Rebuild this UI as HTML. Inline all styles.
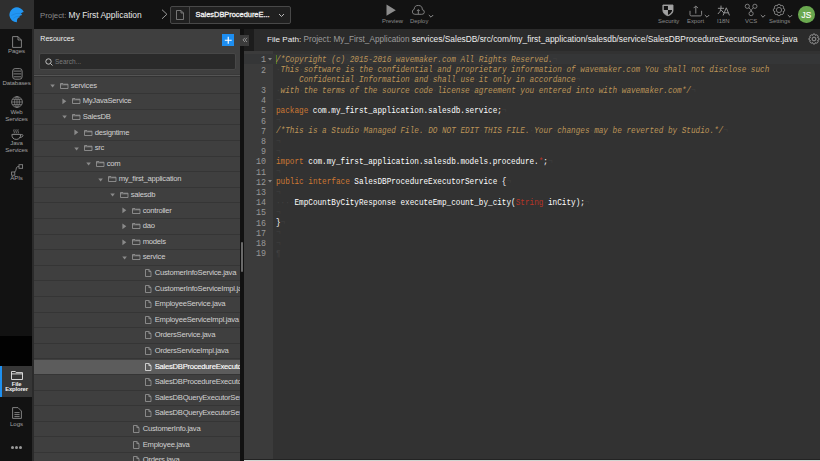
<!DOCTYPE html>
<html><head><meta charset="utf-8">
<style>
*{margin:0;padding:0;box-sizing:border-box}
html,body{width:820px;height:461px;overflow:hidden;background:#111;font-family:"Liberation Sans",sans-serif}
.a{position:absolute}
#top{left:0;top:0;width:820px;height:29px;background:#121212}
#logo{left:0;top:0;width:33.5px;height:28.5px;background:#2f2f2f}
#nav{left:0;top:29px;width:32px;height:432px;background:#121212}
#res{left:34px;top:29px;width:206px;height:432px;background:#3f3f3f;overflow:hidden}
#split{left:240px;top:29px;width:4px;height:432px;background:#111}
#fpdark{left:244px;top:29px;width:10px;height:22px;background:#1c1c1c}
#fp{left:254px;top:29px;width:566px;height:22px;background:#2b2b2b}
#gut{left:244px;top:51px;width:29px;height:410px;background:#3b3b3b}
#code{left:273px;top:51px;width:547px;height:410px;background:#323232}
.ti{position:absolute;color:#8a8a8a;font-size:5.9px;line-height:7px;text-align:center;white-space:nowrap}
.tl{position:absolute;color:#a0a0a0;font-size:6.1px;letter-spacing:-0.1px;line-height:6.5px;text-align:center;width:33px;left:0;white-space:nowrap}
.row{position:absolute;left:0;width:206px;height:15.6px;border-bottom:1px solid #353535;color:#d0d0d0;font-size:7.65px;letter-spacing:-0.25px;line-height:13.4px;white-space:nowrap}
.row span{position:absolute;top:0}
.row svg{position:absolute}
.code{position:absolute;left:276px;font-family:"Liberation Mono",monospace;font-size:8.8px;line-height:10.2px;white-space:pre;color:#fff;transform:scaleX(0.8731);transform-origin:0 0}
.gn{position:absolute;left:244px;width:22px;text-align:right;font-family:"Liberation Mono",monospace;font-size:8.4px;line-height:10.2px;color:#999}
.cm{color:#BC9458;font-style:italic}
.kw{color:#CC7833}
.sf{color:#B83426}
.inv{color:#404040;font-style:normal}
</style></head><body>
<div id="top" class="a"></div>
<div id="logo" class="a">
  <svg class="a" style="left:9px;top:6.5px" width="16" height="16" viewBox="0 0 16 16">
    <path d="M7.93 15.27 A7.45 7.45 0 1 1 14.77 5.02 Q13.1 5.4 11.9 6.4 Q12.9 7 13.17 7.98 Q11.5 8.2 10.3 9.15 Q10.8 9.6 10.67 10.3 Q9.2 10.7 8.3 11.9 Q7.8 13.5 7.93 15.27 Z" fill="#2196f3"/>
    <path d="M2.4 8.4 Q6.8 5.6 11.9 6.4" stroke="#1a6fc0" stroke-width="0.6" fill="none" opacity="0.6"/>
    <path d="M4.2 11.4 Q7.2 9 10.3 9.15" stroke="#1a6fc0" stroke-width="0.6" fill="none" opacity="0.6"/>
  </svg>
</div>
<div class="a" style="left:40px;top:9.6px;font-size:7.8px;line-height:10px;white-space:nowrap;color:#8a8a8a">Project: <span style="color:#e6e6e6;font-size:8.45px">My First Application</span></div>
<!-- breadcrumb chevron -->
<svg class="a" style="left:160.5px;top:8.6px" width="8" height="10.5" viewBox="0 0 8 10.5"><path d="M1 0.7 L5.9 5.25 L1 9.8" stroke="#9a9a9a" stroke-width="1" fill="none"/></svg>
<!-- dropdown -->
<div class="a" style="left:170px;top:6px;width:121px;height:18px;border:1px solid #484848;border-radius:2px;background:#202020"></div>
<div class="a" style="left:189px;top:7px;width:1px;height:16px;background:#484848"></div>
<svg class="a" style="left:175px;top:10px" width="10" height="10" viewBox="0 0 10 10"><path d="M1.5 0.5 H6 L8.5 3 V9.5 H1.5 Z M6 0.5 V3 H8.5" stroke="#8a8a8a" stroke-width="0.8" fill="none"/></svg>
<div class="a" style="left:195.5px;top:10px;font-size:7.42px;line-height:9px;color:#f0f0f0;white-space:nowrap;-webkit-text-stroke:0.3px #f0f0f0">SalesDBProcedureE...</div>
<svg class="a" style="left:278px;top:13px" width="7" height="5" viewBox="0 0 7 5"><path d="M1 1 L3.5 3.5 L6 1" stroke="#bbb" stroke-width="1" fill="none"/></svg>

<!-- toolbar icons -->
<svg class="a" style="left:386px;top:4px" width="10" height="13" viewBox="0 0 10 13"><path d="M0.5 0.5 L9.8 6.2 L0.5 11.8 Z" fill="#8c8c8c"/></svg>
<div class="ti" style="left:382px;top:18px">Preview</div>
<svg class="a" style="left:412.4px;top:4.2px" width="13" height="11" viewBox="0 0 13 11"><path d="M2.9 10.3 H9.7 A2.3 2.3 0 0 0 10.3 5.7 A4.05 4.05 0 0 0 2.2 5.3 A2.55 2.55 0 0 0 2.9 10.3 Z" stroke="#8a8a8a" stroke-width="0.9" fill="none"/><path d="M6.3 10.1 V5.6 M4.9 7 L6.3 5.6 L7.7 7" stroke="#8a8a8a" stroke-width="0.9" fill="none"/></svg>
<div class="ti" style="left:410px;top:18px">Deploy</div>
<svg class="a" style="left:428px;top:14px" width="6" height="5" viewBox="0 0 6 5"><path d="M0.8 1 L3 3.2 L5.2 1" stroke="#9a9a9a" stroke-width="0.9" fill="none"/></svg>

<svg class="a" style="left:662px;top:4px" width="12" height="13" viewBox="0 0 12 13"><path d="M0.9 1 H11 V6.3 Q11 10.2 5.95 11.8 Q0.9 10.2 0.9 6.3 Z" stroke="#9c9c9c" stroke-width="0.9" fill="#a3a3a3"/><path d="M1.8 1.9 H5.95 V6.1 H1.8 Z M5.95 6.1 H10.1 Q9.9 9.4 5.95 10.9 Z" fill="#111"/></svg>
<div class="ti" style="left:658px;top:18px">Security</div>
<svg class="a" style="left:688.6px;top:4px" width="14" height="13" viewBox="0 0 14 13"><path d="M1 6.8 V10.6 Q1 11.9 2.3 11.9 H11.3 Q12.6 11.9 12.6 10.6 V6.8" stroke="#8c8c8c" stroke-width="0.95" fill="none"/><path d="M6.8 9.6 V2.4 M4.8 4.1 Q5.6 2.6 6.8 2.2 Q8 2.6 8.8 4.1" stroke="#8c8c8c" stroke-width="0.95" fill="none"/></svg>
<div class="ti" style="left:687px;top:18px">Export</div>
<svg class="a" style="left:704px;top:14px" width="6" height="5" viewBox="0 0 6 5"><path d="M0.8 1 L3 3.2 L5.2 1" stroke="#9a9a9a" stroke-width="0.9" fill="none"/></svg>
<svg class="a" style="left:716.5px;top:4.5px" width="14" height="11" viewBox="0 0 14 11"><path d="M4 0.6 V3.2 M0.9 3.3 H7 M4 3.3 Q3.7 6.8 0.9 9 M4.2 5 L7 8.2" stroke="#9a9a9a" stroke-width="0.95" fill="none"/><path d="M6.1 10.4 L9.3 2.8 L12.5 10.4 M7.3 7.8 H11.3" stroke="#9a9a9a" stroke-width="0.95" fill="none"/></svg>
<div class="ti" style="left:717px;top:18px">I18N</div>
<svg class="a" style="left:744px;top:3px" width="14" height="14" viewBox="0 0 14 14"><circle cx="3.3" cy="3.3" r="2.1" stroke="#8c8c8c" stroke-width="0.85" fill="none"/><circle cx="10.9" cy="3.3" r="2.1" stroke="#8c8c8c" stroke-width="0.85" fill="none"/><circle cx="7.1" cy="10.6" r="2.1" stroke="#8c8c8c" stroke-width="0.85" fill="none"/><path d="M4.8 4.8 Q7.1 6.2 7.1 8.5 M9.4 4.8 Q7.1 6.2 7.1 8.5" stroke="#8c8c8c" stroke-width="0.85" fill="none"/></svg>
<div class="ti" style="left:745px;top:18px">VCS</div>
<svg class="a" style="left:759.5px;top:14px" width="6" height="5" viewBox="0 0 6 5"><path d="M0.8 1 L3 3.2 L5.2 1" stroke="#9a9a9a" stroke-width="0.9" fill="none"/></svg>
<svg class="a" style="left:771.5px;top:2.5px" width="14" height="14" viewBox="0 0 14 14"><path d="M11.07 8.68 A1.6 1.6 0 1 1 8.68 11.07 A1.6 1.6 0 1 1 5.32 11.07 A1.6 1.6 0 1 1 2.93 8.68 A1.6 1.6 0 1 1 2.93 5.32 A1.6 1.6 0 1 1 5.32 2.93 A1.6 1.6 0 1 1 8.68 2.93 A1.6 1.6 0 1 1 11.07 5.32 A1.6 1.6 0 1 1 11.07 8.68 Z" stroke="#8c8c8c" stroke-width="0.85" fill="none"/><circle cx="7" cy="7" r="2.6" stroke="#8c8c8c" stroke-width="0.85" fill="none"/></svg>
<div class="ti" style="left:769px;top:18px">Settings</div>
<svg class="a" style="left:787px;top:14px" width="6" height="5" viewBox="0 0 6 5"><path d="M0.8 1 L3 3.2 L5.2 1" stroke="#9a9a9a" stroke-width="0.9" fill="none"/></svg>
<div class="a" style="left:798.2px;top:6.2px;width:16.4px;height:16.4px;border-radius:50%;background:#6aa84f;color:#fff;font-size:8.2px;line-height:20.2px;text-align:center;-webkit-text-stroke:0.15px #fff">JS</div>

<!-- left nav -->
<div id="nav" class="a"></div>
<svg class="a" style="left:12px;top:36px" width="10" height="12" viewBox="0 0 10 12"><path d="M0.6 0.6 H6 L9.4 4 V11.4 H0.6 Z M6 0.6 V4 H9.4" stroke="#8c8c8c" stroke-width="0.9" fill="none"/></svg>
<div class="tl" style="top:48px">Pages</div>
<svg class="a" style="left:11.7px;top:67.6px" width="11" height="12" viewBox="0 0 11 12"><rect x="0.7" y="0.6" width="9.4" height="10.6" rx="2.4" stroke="#8c8c8c" stroke-width="0.9" fill="none"/><path d="M1.6 3.1 H9.2 M1.6 5.9 H9.2 M1.6 8.8 H9.2" stroke="#8c8c8c" stroke-width="0.9"/></svg>
<div class="tl" style="top:80px">Databases</div>
<svg class="a" style="left:10.5px;top:96px" width="12" height="12" viewBox="0 0 12 12"><circle cx="6" cy="6" r="5.4" stroke="#8c8c8c" stroke-width="0.8" fill="none"/><ellipse cx="6" cy="6" rx="2.4" ry="5.4" stroke="#8c8c8c" stroke-width="0.7" fill="none"/><path d="M6 0.6 V11.4 M0.6 6 H11.4 M1.3 3.4 H10.7 M1.3 8.6 H10.7" stroke="#8c8c8c" stroke-width="0.7" fill="none"/></svg>
<div class="tl" style="top:109px">Web<br>Services</div>
<svg class="a" style="left:10.5px;top:128.5px" width="13" height="11" viewBox="0 0 13 11"><path d="M3.1 0.4 Q2.5 1.6 3.1 2.6 Q3.6 3.5 3.1 4.4 M5.1 0.4 Q4.5 1.6 5.1 2.6 Q5.6 3.5 5.1 4.4 M7.1 0.4 Q6.5 1.6 7.1 2.6 Q7.6 3.5 7.1 4.4" stroke="#8c8c8c" stroke-width="0.85" fill="none"/><path d="M0.9 5.4 H9.6 Q9.6 10.4 5.25 10.4 Q0.9 10.4 0.9 5.4 Z" stroke="#8c8c8c" stroke-width="0.95" fill="none"/><path d="M9.4 5.6 Q12.4 5.2 12 6.8 Q11.5 8.4 8.6 8.6" stroke="#8c8c8c" stroke-width="0.85" fill="none"/></svg>
<div class="tl" style="top:140px">Java<br>Services</div>
<svg class="a" style="left:10.8px;top:163.5px" width="13" height="12" viewBox="0 0 13 12"><rect x="0.6" y="8" width="3.2" height="3.2" stroke="#8c8c8c" stroke-width="0.85" fill="none"/><rect x="8" y="0.7" width="3.6" height="3.6" stroke="#8c8c8c" stroke-width="0.85" fill="none"/><path d="M3.8 8 Q5.2 6.6 5.4 3.8 Q5.6 2.5 8 2.5" stroke="#8c8c8c" stroke-width="0.85" fill="none"/></svg>
<div class="tl" style="top:174.5px">APIs</div>

<div class="a" style="left:0;top:335.7px;width:32px;height:30px;background:#020202"></div>
<div class="a" style="left:32px;top:29px;width:2px;height:432px;background:#2b2b2b"></div>
<div class="a" style="left:0;top:365.6px;width:32px;height:31.6px;background:#363636"></div>
<div class="a" style="left:0;top:365.6px;width:1.6px;height:31.6px;background:#1e90f0"></div>
<svg class="a" style="left:10.8px;top:370.6px" width="12" height="9" viewBox="0 0 12 9"><path d="M0.5 0.5 H4.3 L5.2 1.6 H11.5 V8.5 H0.5 Z M0.5 2.9 H11.5" stroke="#e8e8e8" stroke-width="0.9" fill="none"/></svg>
<div class="tl" style="top:381.6px;color:#f2f2f2;font-weight:bold;font-size:5.9px;line-height:5.8px;letter-spacing:-0.15px">File<br>Explorer</div>
<svg class="a" style="left:12px;top:407px" width="10" height="12" viewBox="0 0 10 12"><path d="M0.6 0.6 H6 L9.4 4 V11.4 H0.6 Z M2.4 5.6 H7.6 M2.4 7.6 H7.6 M2.4 9.6 H7.6" stroke="#8c8c8c" stroke-width="0.9" fill="none"/></svg>
<div class="tl" style="top:421px">Logs</div>
<div class="a" style="left:10.6px;top:446px;width:13px;height:4px">
  <div class="a" style="left:0;top:0;width:3px;height:3px;border-radius:50%;background:#999"></div>
  <div class="a" style="left:4.4px;top:0;width:3px;height:3px;border-radius:50%;background:#999"></div>
  <div class="a" style="left:8.8px;top:0;width:3px;height:3px;border-radius:50%;background:#999"></div>
</div>

<!-- resources panel -->
<div id="res" class="a">
  <div class="a" style="left:6.3px;top:5.8px;font-size:7.1px;line-height:9px;color:#f0f0f0">Resources</div>
  <div class="a" style="left:187.7px;top:4.6px;width:12.5px;height:12.5px;background:#1d8ef1"></div>
  <svg class="a" style="left:187.7px;top:4.6px" width="12.5" height="12.5" viewBox="0 0 12.5 12.5"><path d="M6.25 2.8 V9.7 M2.8 6.25 H9.7" stroke="#fff" stroke-width="1.15"/></svg>
  <div class="a" style="left:5px;top:24px;width:196.5px;height:16.5px;background:#2a2a2a;border:1px solid #474747;border-radius:2px"></div>
  <svg class="a" style="left:10.5px;top:28.5px" width="8" height="8" viewBox="0 0 8 8"><circle cx="3.5" cy="3.5" r="2.7" stroke="#cfcfcf" stroke-width="0.9" fill="none"/><path d="M5.5 5.5 L7.5 7.5" stroke="#cfcfcf" stroke-width="0.9"/></svg>
  <div class="a" style="left:21px;top:29px;font-size:6.5px;line-height:8px;color:#7a7a7a">Search...</div>
  <div class="a" style="left:0;top:45px;width:207px;height:1px;background:#393939"></div><div class="a" style="left:0;top:46px;width:207px;height:1px;background:#545454"></div><div class="a" style="left:0;top:47px;width:207px;height:1px;background:#333"></div>
  <div id="tree" class="a" style="left:0;top:47px;width:207px;height:400px">
<div class="row" style="top:2.70px;"><svg style="left:15.7px;top:5.6px" width="6" height="4" viewBox="0 0 6 4"><path d="M0.3 0.4 H4.9 L2.6 3.5 Z" fill="#8a8a8a"/></svg><svg style="left:26.1px;top:4.0px" width="8.5" height="6" viewBox="0 0 8.5 6"><path d="M0.5 0.5 H3 L3.6 1.2 H8 V5.5 H0.5 Z M0.5 1.8 H8" stroke="#9a9a9a" stroke-width="0.8" fill="none"/></svg><span style="left:36.7px">services</span></div>
<div class="row" style="top:18.30px;"><svg style="left:27.6px;top:3.9px" width="5" height="7" viewBox="0 0 5 7"><path d="M0.4 0.4 V6.2 L4.3 3.3 Z" fill="#8a8a8a"/></svg><svg style="left:38.1px;top:4.0px" width="8.5" height="6" viewBox="0 0 8.5 6"><path d="M0.5 0.5 H3 L3.6 1.2 H8 V5.5 H0.5 Z M0.5 1.8 H8" stroke="#9a9a9a" stroke-width="0.8" fill="none"/></svg><span style="left:48.7px">MyJavaService</span></div>
<div class="row" style="top:33.90px;"><svg style="left:27.7px;top:5.6px" width="6" height="4" viewBox="0 0 6 4"><path d="M0.3 0.4 H4.9 L2.6 3.5 Z" fill="#8a8a8a"/></svg><svg style="left:38.1px;top:4.0px" width="8.5" height="6" viewBox="0 0 8.5 6"><path d="M0.5 0.5 H3 L3.6 1.2 H8 V5.5 H0.5 Z M0.5 1.8 H8" stroke="#9a9a9a" stroke-width="0.8" fill="none"/></svg><span style="left:48.7px">SalesDB</span></div>
<div class="row" style="top:49.50px;"><svg style="left:39.6px;top:3.9px" width="5" height="7" viewBox="0 0 5 7"><path d="M0.4 0.4 V6.2 L4.3 3.3 Z" fill="#8a8a8a"/></svg><svg style="left:50.1px;top:4.0px" width="8.5" height="6" viewBox="0 0 8.5 6"><path d="M0.5 0.5 H3 L3.6 1.2 H8 V5.5 H0.5 Z M0.5 1.8 H8" stroke="#9a9a9a" stroke-width="0.8" fill="none"/></svg><span style="left:60.7px">designtime</span></div>
<div class="row" style="top:65.10px;"><svg style="left:39.7px;top:5.6px" width="6" height="4" viewBox="0 0 6 4"><path d="M0.3 0.4 H4.9 L2.6 3.5 Z" fill="#8a8a8a"/></svg><svg style="left:50.1px;top:4.0px" width="8.5" height="6" viewBox="0 0 8.5 6"><path d="M0.5 0.5 H3 L3.6 1.2 H8 V5.5 H0.5 Z M0.5 1.8 H8" stroke="#9a9a9a" stroke-width="0.8" fill="none"/></svg><span style="left:60.7px">src</span></div>
<div class="row" style="top:80.70px;"><svg style="left:51.7px;top:5.6px" width="6" height="4" viewBox="0 0 6 4"><path d="M0.3 0.4 H4.9 L2.6 3.5 Z" fill="#8a8a8a"/></svg><svg style="left:62.1px;top:4.0px" width="8.5" height="6" viewBox="0 0 8.5 6"><path d="M0.5 0.5 H3 L3.6 1.2 H8 V5.5 H0.5 Z M0.5 1.8 H8" stroke="#9a9a9a" stroke-width="0.8" fill="none"/></svg><span style="left:72.7px">com</span></div>
<div class="row" style="top:96.30px;"><svg style="left:63.7px;top:5.6px" width="6" height="4" viewBox="0 0 6 4"><path d="M0.3 0.4 H4.9 L2.6 3.5 Z" fill="#8a8a8a"/></svg><svg style="left:74.1px;top:4.0px" width="8.5" height="6" viewBox="0 0 8.5 6"><path d="M0.5 0.5 H3 L3.6 1.2 H8 V5.5 H0.5 Z M0.5 1.8 H8" stroke="#9a9a9a" stroke-width="0.8" fill="none"/></svg><span style="left:84.7px">my_first_application</span></div>
<div class="row" style="top:111.90px;"><svg style="left:75.7px;top:5.6px" width="6" height="4" viewBox="0 0 6 4"><path d="M0.3 0.4 H4.9 L2.6 3.5 Z" fill="#8a8a8a"/></svg><svg style="left:86.1px;top:4.0px" width="8.5" height="6" viewBox="0 0 8.5 6"><path d="M0.5 0.5 H3 L3.6 1.2 H8 V5.5 H0.5 Z M0.5 1.8 H8" stroke="#9a9a9a" stroke-width="0.8" fill="none"/></svg><span style="left:96.7px">salesdb</span></div>
<div class="row" style="top:127.50px;"><svg style="left:87.6px;top:3.9px" width="5" height="7" viewBox="0 0 5 7"><path d="M0.4 0.4 V6.2 L4.3 3.3 Z" fill="#8a8a8a"/></svg><svg style="left:98.1px;top:4.0px" width="8.5" height="6" viewBox="0 0 8.5 6"><path d="M0.5 0.5 H3 L3.6 1.2 H8 V5.5 H0.5 Z M0.5 1.8 H8" stroke="#9a9a9a" stroke-width="0.8" fill="none"/></svg><span style="left:108.7px">controller</span></div>
<div class="row" style="top:143.10px;"><svg style="left:87.6px;top:3.9px" width="5" height="7" viewBox="0 0 5 7"><path d="M0.4 0.4 V6.2 L4.3 3.3 Z" fill="#8a8a8a"/></svg><svg style="left:98.1px;top:4.0px" width="8.5" height="6" viewBox="0 0 8.5 6"><path d="M0.5 0.5 H3 L3.6 1.2 H8 V5.5 H0.5 Z M0.5 1.8 H8" stroke="#9a9a9a" stroke-width="0.8" fill="none"/></svg><span style="left:108.7px">dao</span></div>
<div class="row" style="top:158.70px;"><svg style="left:87.6px;top:3.9px" width="5" height="7" viewBox="0 0 5 7"><path d="M0.4 0.4 V6.2 L4.3 3.3 Z" fill="#8a8a8a"/></svg><svg style="left:98.1px;top:4.0px" width="8.5" height="6" viewBox="0 0 8.5 6"><path d="M0.5 0.5 H3 L3.6 1.2 H8 V5.5 H0.5 Z M0.5 1.8 H8" stroke="#9a9a9a" stroke-width="0.8" fill="none"/></svg><span style="left:108.7px">models</span></div>
<div class="row" style="top:174.30px;"><svg style="left:87.7px;top:5.6px" width="6" height="4" viewBox="0 0 6 4"><path d="M0.3 0.4 H4.9 L2.6 3.5 Z" fill="#8a8a8a"/></svg><svg style="left:98.1px;top:4.0px" width="8.5" height="6" viewBox="0 0 8.5 6"><path d="M0.5 0.5 H3 L3.6 1.2 H8 V5.5 H0.5 Z M0.5 1.8 H8" stroke="#9a9a9a" stroke-width="0.8" fill="none"/></svg><span style="left:108.7px">service</span></div>
<div class="row" style="top:189.90px;"><svg style="left:111.3px;top:3.2px" width="6.5" height="8" viewBox="0 0 6.5 8"><path d="M0.5 0.5 H3.9 L6 2.6 V7.5 H0.5 Z M3.9 0.5 V2.6 H6" stroke="#9a9a9a" stroke-width="0.8" fill="none"/></svg><span style="left:120.7px">CustomerInfoService.java</span></div>
<div class="row" style="top:205.50px;"><svg style="left:111.3px;top:3.2px" width="6.5" height="8" viewBox="0 0 6.5 8"><path d="M0.5 0.5 H3.9 L6 2.6 V7.5 H0.5 Z M3.9 0.5 V2.6 H6" stroke="#9a9a9a" stroke-width="0.8" fill="none"/></svg><span style="left:120.7px">CustomerInfoServiceImpl.java</span></div>
<div class="row" style="top:221.10px;"><svg style="left:111.3px;top:3.2px" width="6.5" height="8" viewBox="0 0 6.5 8"><path d="M0.5 0.5 H3.9 L6 2.6 V7.5 H0.5 Z M3.9 0.5 V2.6 H6" stroke="#9a9a9a" stroke-width="0.8" fill="none"/></svg><span style="left:120.7px">EmployeeService.java</span></div>
<div class="row" style="top:236.70px;"><svg style="left:111.3px;top:3.2px" width="6.5" height="8" viewBox="0 0 6.5 8"><path d="M0.5 0.5 H3.9 L6 2.6 V7.5 H0.5 Z M3.9 0.5 V2.6 H6" stroke="#9a9a9a" stroke-width="0.8" fill="none"/></svg><span style="left:120.7px">EmployeeServiceImpl.java</span></div>
<div class="row" style="top:252.30px;"><svg style="left:111.3px;top:3.2px" width="6.5" height="8" viewBox="0 0 6.5 8"><path d="M0.5 0.5 H3.9 L6 2.6 V7.5 H0.5 Z M3.9 0.5 V2.6 H6" stroke="#9a9a9a" stroke-width="0.8" fill="none"/></svg><span style="left:120.7px">OrdersService.java</span></div>
<div class="row" style="top:267.90px;"><svg style="left:111.3px;top:3.2px" width="6.5" height="8" viewBox="0 0 6.5 8"><path d="M0.5 0.5 H3.9 L6 2.6 V7.5 H0.5 Z M3.9 0.5 V2.6 H6" stroke="#9a9a9a" stroke-width="0.8" fill="none"/></svg><span style="left:120.7px">OrdersServiceImpl.java</span></div>
<div class="row" style="top:283.50px;background:#5c5c5c;color:#ffffff;-webkit-text-stroke:0.12px #fff;"><svg style="left:111.3px;top:3.2px" width="6.5" height="8" viewBox="0 0 6.5 8"><path d="M0.5 0.5 H3.9 L6 2.6 V7.5 H0.5 Z M3.9 0.5 V2.6 H6" stroke="#e8e8e8" stroke-width="0.8" fill="none"/></svg><span style="left:120.7px">SalesDBProcedureExecutorService.java</span></div>
<div class="row" style="top:299.10px;"><svg style="left:111.3px;top:3.2px" width="6.5" height="8" viewBox="0 0 6.5 8"><path d="M0.5 0.5 H3.9 L6 2.6 V7.5 H0.5 Z M3.9 0.5 V2.6 H6" stroke="#9a9a9a" stroke-width="0.8" fill="none"/></svg><span style="left:120.7px">SalesDBProcedureExecutorServiceImpl.java</span></div>
<div class="row" style="top:314.70px;"><svg style="left:111.3px;top:3.2px" width="6.5" height="8" viewBox="0 0 6.5 8"><path d="M0.5 0.5 H3.9 L6 2.6 V7.5 H0.5 Z M3.9 0.5 V2.6 H6" stroke="#9a9a9a" stroke-width="0.8" fill="none"/></svg><span style="left:120.7px">SalesDBQueryExecutorService.java</span></div>
<div class="row" style="top:330.30px;"><svg style="left:111.3px;top:3.2px" width="6.5" height="8" viewBox="0 0 6.5 8"><path d="M0.5 0.5 H3.9 L6 2.6 V7.5 H0.5 Z M3.9 0.5 V2.6 H6" stroke="#9a9a9a" stroke-width="0.8" fill="none"/></svg><span style="left:120.7px">SalesDBQueryExecutorServiceImpl.java</span></div>
<div class="row" style="top:345.90px;"><svg style="left:99.3px;top:3.2px" width="6.5" height="8" viewBox="0 0 6.5 8"><path d="M0.5 0.5 H3.9 L6 2.6 V7.5 H0.5 Z M3.9 0.5 V2.6 H6" stroke="#9a9a9a" stroke-width="0.8" fill="none"/></svg><span style="left:108.7px">CustomerInfo.java</span></div>
<div class="row" style="top:361.50px;"><svg style="left:99.3px;top:3.2px" width="6.5" height="8" viewBox="0 0 6.5 8"><path d="M0.5 0.5 H3.9 L6 2.6 V7.5 H0.5 Z M3.9 0.5 V2.6 H6" stroke="#9a9a9a" stroke-width="0.8" fill="none"/></svg><span style="left:108.7px">Employee.java</span></div>
<div class="row" style="top:377.10px;"><svg style="left:99.3px;top:3.2px" width="6.5" height="8" viewBox="0 0 6.5 8"><path d="M0.5 0.5 H3.9 L6 2.6 V7.5 H0.5 Z M3.9 0.5 V2.6 H6" stroke="#9a9a9a" stroke-width="0.8" fill="none"/></svg><span style="left:108.7px">Orders.java</span></div>
</div>
</div>
<div id="split" class="a"></div>
<div class="a" style="left:241px;top:242px;width:2px;height:30px;background:#6a6a6a;border-radius:1px"></div>

<!-- editor -->
<div id="fpdark" class="a"></div>
<div id="fp" class="a"></div>
<div class="a" style="left:240px;top:34.6px;width:9px;height:11.2px;background:#3b3b3b"></div>
<svg class="a" style="left:241.5px;top:37.3px" width="6" height="6" viewBox="0 0 6 6"><path d="M2.9 0.8 L1 2.9 L2.9 5 M5 0.8 L3.1 2.9 L5 5" stroke="#b5b5b5" stroke-width="0.7" fill="none"/></svg>
<div class="a" style="left:267px;top:33.5px;font-size:8.1px;line-height:10px;white-space:nowrap;color:#ededed">File Path: <span style="color:#9c9c9c;font-size:8.2px">Project: My_First_Application</span> <span style="font-size:8.38px">services/SalesDB/src/com/my_first_application/salesdb/service/SalesDBProcedureExecutorService.java</span></div>
<svg class="a" style="left:808px;top:33px" width="12" height="12" viewBox="0 0 12 12"><path d="M9.60 7.49 A1.45 1.45 0 1 1 7.49 9.60 A1.45 1.45 0 1 1 4.51 9.60 A1.45 1.45 0 1 1 2.40 7.49 A1.45 1.45 0 1 1 2.40 4.51 A1.45 1.45 0 1 1 4.51 2.40 A1.45 1.45 0 1 1 7.49 2.40 A1.45 1.45 0 1 1 9.60 4.51 A1.45 1.45 0 1 1 9.60 7.49 Z" stroke="#a8a8a8" stroke-width="0.85" fill="none"/><circle cx="6" cy="6" r="1.9" stroke="#a8a8a8" stroke-width="0.85" fill="none"/></svg>

<div id="gut" class="a"></div>
<div id="code" class="a"></div>
<div class="a" style="left:244px;top:54px;width:29px;height:10.2px;background:#353637"></div>
<div class="a" style="left:273px;top:54px;width:547px;height:10.2px;background:#353637"></div>
<div class="a" style="left:244px;top:459px;width:576px;height:1px;background:#232323"></div>
<div class="a" style="left:244px;top:460px;width:576px;height:1px;background:#d2d5d2"></div>
<div class="gn" style="top:55.30px">1</div>
<div class="gn" style="top:65.50px">2</div>
<div class="gn" style="top:85.90px">3</div>
<div class="gn" style="top:96.10px">4</div>
<div class="gn" style="top:106.30px">5</div>
<div class="gn" style="top:116.50px">6</div>
<div class="gn" style="top:126.70px">7</div>
<div class="gn" style="top:136.90px">8</div>
<div class="gn" style="top:147.10px">9</div>
<div class="gn" style="top:157.30px">10</div>
<div class="gn" style="top:167.50px">11</div>
<div class="gn" style="top:177.70px">12</div>
<div class="gn" style="top:187.90px">13</div>
<div class="gn" style="top:198.10px">14</div>
<div class="gn" style="top:208.30px">15</div>
<div class="gn" style="top:218.50px">16</div>
<div class="gn" style="top:228.70px">17</div>
<div class="gn" style="top:238.90px">18</div>
<div class="gn" style="top:249.10px">19</div>
<svg class="a" style="left:268px;top:57.80px" width="4" height="3" viewBox="0 0 4 3"><path d="M0 0 H4 L2 2.6 Z" fill="#8a8a8a"/></svg>
<svg class="a" style="left:268px;top:180.20px" width="4" height="3" viewBox="0 0 4 3"><path d="M0 0 H4 L2 2.6 Z" fill="#8a8a8a"/></svg>
<div class="a" style="left:275.5px;top:54.50px;width:0.8px;height:9.5px;background:#91FF00;opacity:0.35"></div>
<div class="code" style="top:55.00px"><span class="cm">/*Copyright<span class="inv">·</span>(c)<span class="inv">·</span>2015-2016<span class="inv">·</span>wavemaker.com<span class="inv">·</span>All<span class="inv">·</span>Rights<span class="inv">·</span>Reserved.</span><span class="inv">¬</span></div>
<div class="code" style="top:65.20px"><span class="cm"><span class="inv">·</span>This<span class="inv">·</span>software<span class="inv">·</span>is<span class="inv">·</span>the<span class="inv">·</span>confidential<span class="inv">·</span>and<span class="inv">·</span>proprietary<span class="inv">·</span>information<span class="inv">·</span>of<span class="inv">·</span>wavemaker.com<span class="inv">·</span>You<span class="inv">·</span>shall<span class="inv">·</span>not<span class="inv">·</span>disclose<span class="inv">·</span>such</span></div>
<div class="code" style="top:75.40px">     <span class="cm">Confidential<span class="inv">·</span>Information<span class="inv">·</span>and<span class="inv">·</span>shall<span class="inv">·</span>use<span class="inv">·</span>it<span class="inv">·</span>only<span class="inv">·</span>in<span class="inv">·</span>accordance</span><span class="inv">¬</span></div>
<div class="code" style="top:85.60px"><span class="cm"><span class="inv">·</span>with<span class="inv">·</span>the<span class="inv">·</span>terms<span class="inv">·</span>of<span class="inv">·</span>the<span class="inv">·</span>source<span class="inv">·</span>code<span class="inv">·</span>license<span class="inv">·</span>agreement<span class="inv">·</span>you<span class="inv">·</span>entered<span class="inv">·</span>into<span class="inv">·</span>with<span class="inv">·</span>wavemaker.com*/</span><span class="inv">¬</span></div>
<div class="code" style="top:95.80px"><span class="inv">¬</span></div>
<div class="code" style="top:106.00px"><span class="kw">package</span><span class="inv">·</span>com.my_first_application.salesdb.service;<span class="inv">¬</span></div>
<div class="code" style="top:116.20px"><span class="inv">¬</span></div>
<div class="code" style="top:126.40px"><span class="cm">/*This<span class="inv">·</span>is<span class="inv">·</span>a<span class="inv">·</span>Studio<span class="inv">·</span>Managed<span class="inv">·</span>File.<span class="inv">·</span>DO<span class="inv">·</span>NOT<span class="inv">·</span>EDIT<span class="inv">·</span>THIS<span class="inv">·</span>FILE.<span class="inv">·</span>Your<span class="inv">·</span>changes<span class="inv">·</span>may<span class="inv">·</span>be<span class="inv">·</span>reverted<span class="inv">·</span>by<span class="inv">·</span>Studio.*/</span><span class="inv">¬</span></div>
<div class="code" style="top:136.60px"><span class="inv">¬</span></div>
<div class="code" style="top:146.80px"><span class="inv">¬</span></div>
<div class="code" style="top:157.00px"><span class="kw">import</span><span class="inv">·</span>com.my_first_application.salesdb.models.procedure.<span class="sf">*</span>;<span class="inv">¬</span></div>
<div class="code" style="top:167.20px"><span class="inv">¬</span></div>
<div class="code" style="top:177.40px"><span class="kw">public</span><span class="inv">·</span><span class="kw">interface</span><span class="inv">·</span>SalesDBProcedureExecutorService<span class="inv">·</span>{<span class="inv">¬</span></div>
<div class="code" style="top:187.60px"><span class="inv">¬</span></div>
<div class="code" style="top:197.80px"><span class="inv">····</span>EmpCountByCityResponse<span class="inv">·</span>executeEmp_count_by_city(<span class="sf">String</span><span class="inv">·</span>inCity);<span class="inv">¬</span></div>
<div class="code" style="top:208.00px"><span class="inv">¬</span></div>
<div class="code" style="top:218.20px">}<span class="inv">¬</span></div>
<div class="code" style="top:228.40px"><span class="inv">¬</span></div>
<div class="code" style="top:238.60px"><span class="inv">¬</span></div>
<div class="code" style="top:248.80px"><span class="inv">¶</span></div>
</body></html>
